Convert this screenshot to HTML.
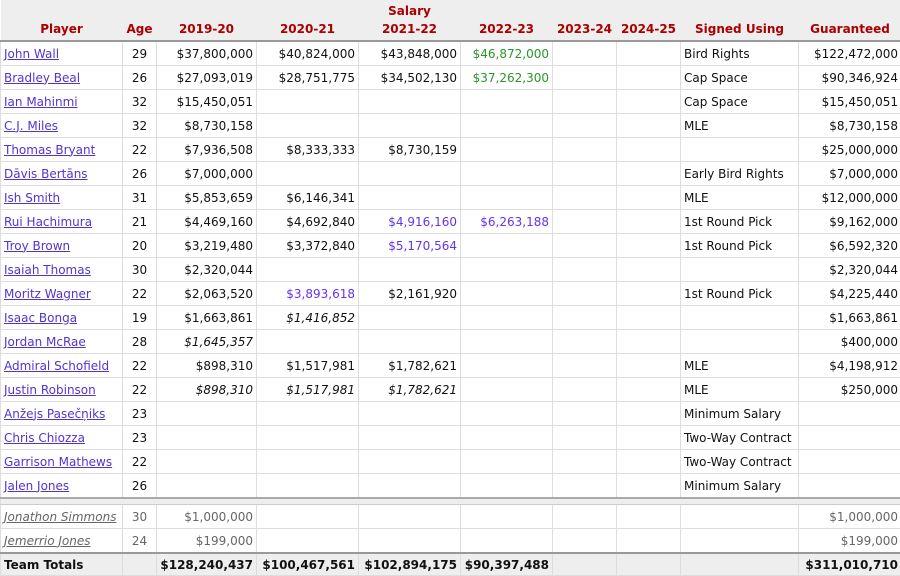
<!DOCTYPE html><html><head><style>
body{margin:0;background:#fff;width:900px;height:574px;overflow:hidden;font-family:"DejaVu Sans","Liberation Sans",sans-serif;font-size:12px;color:#111}
table{border-collapse:collapse;table-layout:fixed;width:901px;position:absolute;left:0;top:0}
td,th{padding:0 3px;white-space:nowrap;overflow:hidden;border:1px solid #ddd;height:23px;text-align:right}
th{color:#a00;font-weight:bold;text-align:center;background:#eee;border:none;height:auto}
tr.h1 th{height:18px;vertical-align:bottom}
tr.h2 th{height:22px;border-bottom:2px solid #999}
td.p{text-align:left}td.a{text-align:center}td.s{text-align:left}
a{color:#5533cc;text-decoration:underline}
.g{color:#2a962a}.v{color:#6633ee}i{font-style:italic}
tr.sep td{height:5px;background:#eee;border-top:2px solid #aaa;border-bottom:1px solid #ccc}
tr.x td{color:#666}tr.x a{color:#666}
tr.t td{background:#eee;font-weight:bold;border-top:2px solid #999;height:21px}
</style></head><body>
<table>
<colgroup><col style="width:122px"><col style="width:34px"><col style="width:100px"><col style="width:102px"><col style="width:102px"><col style="width:92px"><col style="width:64px"><col style="width:64px"><col style="width:118px"><col style="width:103px"></colgroup>
<tr class="h1"><th></th><th></th><th></th><th></th><th>Salary</th><th></th><th></th><th></th><th></th><th></th></tr>
<tr class="h2"><th>Player</th><th>Age</th><th>2019-20</th><th>2020-21</th><th>2021-22</th><th>2022-23</th><th>2023-24</th><th>2024-25</th><th>Signed Using</th><th>Guaranteed</th></tr>
<tr><td class="p"><a>John Wall</a></td><td class="a">29</td><td>$37,800,000</td><td>$40,824,000</td><td>$43,848,000</td><td class="g">$46,872,000</td><td></td><td></td><td class="s">Bird Rights</td><td>$122,472,000</td></tr>
<tr><td class="p"><a>Bradley Beal</a></td><td class="a">26</td><td>$27,093,019</td><td>$28,751,775</td><td>$34,502,130</td><td class="g">$37,262,300</td><td></td><td></td><td class="s">Cap Space</td><td>$90,346,924</td></tr>
<tr><td class="p"><a>Ian Mahinmi</a></td><td class="a">32</td><td>$15,450,051</td><td></td><td></td><td></td><td></td><td></td><td class="s">Cap Space</td><td>$15,450,051</td></tr>
<tr><td class="p"><a>C.J. Miles</a></td><td class="a">32</td><td>$8,730,158</td><td></td><td></td><td></td><td></td><td></td><td class="s">MLE</td><td>$8,730,158</td></tr>
<tr><td class="p"><a>Thomas Bryant</a></td><td class="a">22</td><td>$7,936,508</td><td>$8,333,333</td><td>$8,730,159</td><td></td><td></td><td></td><td class="s"></td><td>$25,000,000</td></tr>
<tr><td class="p"><a>Dāvis Bertāns</a></td><td class="a">26</td><td>$7,000,000</td><td></td><td></td><td></td><td></td><td></td><td class="s">Early Bird Rights</td><td>$7,000,000</td></tr>
<tr><td class="p"><a>Ish Smith</a></td><td class="a">31</td><td>$5,853,659</td><td>$6,146,341</td><td></td><td></td><td></td><td></td><td class="s">MLE</td><td>$12,000,000</td></tr>
<tr><td class="p"><a>Rui Hachimura</a></td><td class="a">21</td><td>$4,469,160</td><td>$4,692,840</td><td class="v">$4,916,160</td><td class="v">$6,263,188</td><td></td><td></td><td class="s">1st Round Pick</td><td>$9,162,000</td></tr>
<tr><td class="p"><a>Troy Brown</a></td><td class="a">20</td><td>$3,219,480</td><td>$3,372,840</td><td class="v">$5,170,564</td><td></td><td></td><td></td><td class="s">1st Round Pick</td><td>$6,592,320</td></tr>
<tr><td class="p"><a>Isaiah Thomas</a></td><td class="a">30</td><td>$2,320,044</td><td></td><td></td><td></td><td></td><td></td><td class="s"></td><td>$2,320,044</td></tr>
<tr><td class="p"><a>Moritz Wagner</a></td><td class="a">22</td><td>$2,063,520</td><td class="v">$3,893,618</td><td>$2,161,920</td><td></td><td></td><td></td><td class="s">1st Round Pick</td><td>$4,225,440</td></tr>
<tr><td class="p"><a>Isaac Bonga</a></td><td class="a">19</td><td>$1,663,861</td><td><i>$1,416,852</i></td><td></td><td></td><td></td><td></td><td class="s"></td><td>$1,663,861</td></tr>
<tr><td class="p"><a>Jordan McRae</a></td><td class="a">28</td><td><i>$1,645,357</i></td><td></td><td></td><td></td><td></td><td></td><td class="s"></td><td>$400,000</td></tr>
<tr><td class="p"><a>Admiral Schofield</a></td><td class="a">22</td><td>$898,310</td><td>$1,517,981</td><td>$1,782,621</td><td></td><td></td><td></td><td class="s">MLE</td><td>$4,198,912</td></tr>
<tr><td class="p"><a>Justin Robinson</a></td><td class="a">22</td><td><i>$898,310</i></td><td><i>$1,517,981</i></td><td><i>$1,782,621</i></td><td></td><td></td><td></td><td class="s">MLE</td><td>$250,000</td></tr>
<tr><td class="p"><a>Anžejs Pasečņiks</a></td><td class="a">23</td><td></td><td></td><td></td><td></td><td></td><td></td><td class="s">Minimum Salary</td><td></td></tr>
<tr><td class="p"><a>Chris Chiozza</a></td><td class="a">23</td><td></td><td></td><td></td><td></td><td></td><td></td><td class="s">Two-Way Contract</td><td></td></tr>
<tr><td class="p"><a>Garrison Mathews</a></td><td class="a">22</td><td></td><td></td><td></td><td></td><td></td><td></td><td class="s">Two-Way Contract</td><td></td></tr>
<tr><td class="p"><a>Jalen Jones</a></td><td class="a">26</td><td></td><td></td><td></td><td></td><td></td><td></td><td class="s">Minimum Salary</td><td></td></tr>
<tr class="sep"><td colspan="10"></td></tr>
<tr class="x"><td class="p"><a><i>Jonathon Simmons</i></a></td><td class="a">30</td><td>$1,000,000</td><td></td><td></td><td></td><td></td><td></td><td class="s"></td><td>$1,000,000</td></tr>
<tr class="x"><td class="p"><a><i>Jemerrio Jones</i></a></td><td class="a">24</td><td>$199,000</td><td></td><td></td><td></td><td></td><td></td><td class="s"></td><td>$199,000</td></tr>
<tr class="t"><td class="p">Team Totals</td><td></td><td>$128,240,437</td><td>$100,467,561</td><td>$102,894,175</td><td>$90,397,488</td><td></td><td></td><td></td><td>$311,010,710</td></tr>
</table>
</body></html>
